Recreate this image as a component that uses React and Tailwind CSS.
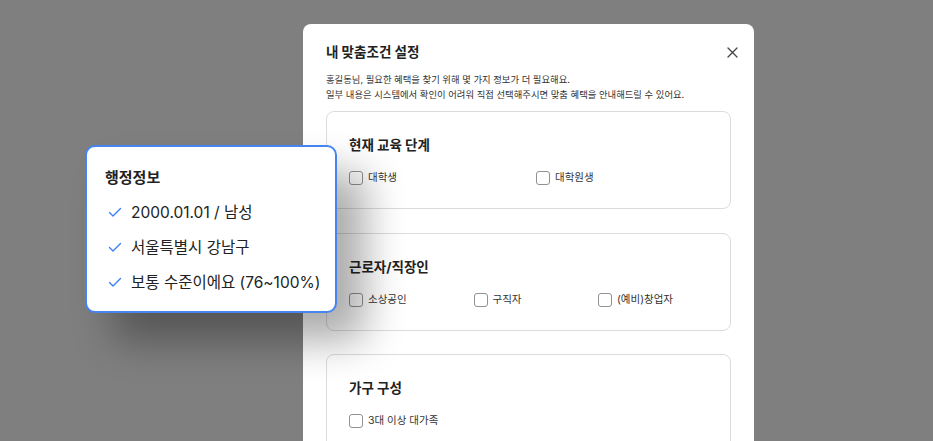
import React from "react";

const sections = [
  { title: "현재 교육 단계", col: "w-[187px]", items: ["대학생", "대학원생"] },
  { title: "근로자/직장인", col: "w-[124.5px]", items: ["소상공인", "구직자", "(예비)창업자"] },
  { title: "가구 구성", col: "w-[187px]", items: ["3대 이상 대가족"] },
];

const adminInfo = ["2000.01.01 / 남성", "서울특별시 강남구", "보통 수준이에요 (76~100%)"];

function CheckIcon() {
  return (
    <svg width="14" height="11" viewBox="0 0 14 11" fill="none" className="shrink-0">
      <polyline points="1.5,5.5 5,9 12.5,1.5" stroke="#3b7ff2" strokeWidth="1.4" strokeLinecap="round" strokeLinejoin="round" />
    </svg>
  );
}

export default function App() {
  return (
    <div
      className="relative h-[441px] w-full overflow-hidden bg-[#7f7f7f] text-[#222]"
      style={{ fontFamily: 'Inter, "Noto Sans CJK KR", sans-serif' }}
    >
      {/* modal */}
      <div className="ml-[303px] mt-[24px] w-[451px] h-[500px] rounded-t-[8px] bg-white px-[23px] pt-[18px]">
        <div className="flex items-center justify-between">
          <h2 className="text-[13.5px] leading-[20px] font-bold">내 맞춤조건 설정</h2>
          <svg width="11" height="11" viewBox="0 0 11 11" className="mr-[-7px]">
            <path d="M1 1L10 10M10 1L1 10" stroke="#444" strokeWidth="1.3" strokeLinecap="round" />
          </svg>
        </div>
        <p className="mt-[10px] text-[9.35px] leading-[15px] text-[#333]">
          홍길동님, 필요한 혜택을 찾기 위해 몇 가지 정보가 더 필요해요.
          <br />
          일부 내용은 시스템에서 확인이 어려워 직접 선택해주시면 맞춤 혜택을 안내해드릴 수 있어요.
        </p>

        <div className="mt-[9px] flex flex-col gap-[23.5px]">
          {sections.map((s) => (
            <div key={s.title} className="rounded-[8px] border border-[#dcdcdc] px-[22px] pt-[23px] pb-[23px]">
              <h3 className="text-[13.5px] leading-[20px] font-bold">{s.title}</h3>
              <div className="mt-[16px] flex">
                {s.items.map((it) => (
                  <label key={it} className={`${s.col} flex shrink-0 items-center gap-[5px]`}>
                    <span className="h-[14px] w-[14px] rounded-[3px] border border-[#929292] bg-white" />
                    <span className="text-[10.5px] leading-[14px] text-[#333]">{it}</span>
                  </label>
                ))}
              </div>
            </div>
          ))}
        </div>
      </div>

      {/* admin info popup */}
      <div className="absolute left-[85px] top-[145px] w-[252px] h-[168px] rounded-[10px] border-2 border-[#4585f2] bg-white pl-[18px] pt-[20px] shadow-[28px_28px_40px_rgba(0,0,0,0.33)]">
        <h4 className="text-[15px] leading-[22px] font-bold">행정정보</h4>
        <ul className="mt-[6px]">
          {adminInfo.map((t) => (
            <li key={t} className="flex h-[35px] items-center gap-[9px] pl-[3px]">
              <CheckIcon />
              <span className="text-[15.5px] leading-[22px] text-[#222]">{t}</span>
            </li>
          ))}
        </ul>
      </div>
    </div>
  );
}
